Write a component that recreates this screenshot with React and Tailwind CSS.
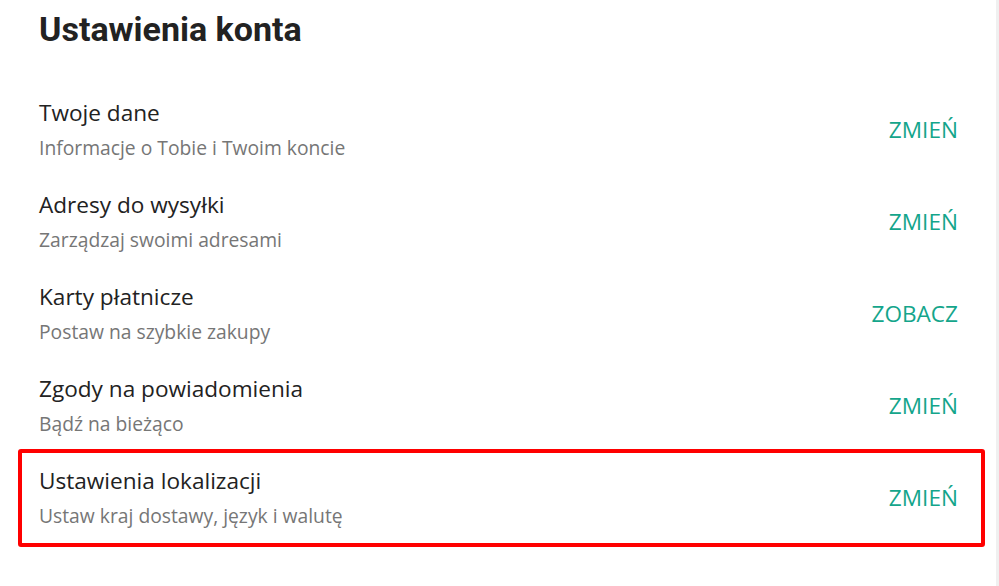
const ITEMS = [
  { title: 'Twoje dane', desc: 'Informacje o Tobie i Twoim koncie', action: 'ZMIEŃ' },
  { title: 'Adresy do wysyłki', desc: 'Zarządzaj swoimi adresami', action: 'ZMIEŃ' },
  { title: 'Karty płatnicze', desc: 'Postaw na szybkie zakupy', action: 'ZOBACZ' },
  { title: 'Zgody na powiadomienia', desc: 'Bądź na bieżąco', action: 'ZMIEŃ' },
  { title: 'Ustawienia lokalizacji', desc: 'Ustaw kraj dostawy, język i walutę', action: 'ZMIEŃ', highlight: true },
];

function Row({ item }) {
  const body = (
    <>
      <div className="flex flex-col">
        <span className="text-[22.6px] leading-[28px] text-[#222]">{item.title}</span>
        <span className="mt-[8px] text-[19.3px] leading-[26px] text-[#767676]">{item.desc}</span>
      </div>
      <button className="text-[22.6px] leading-[28px] text-[#14a58b]">{item.action}</button>
    </>
  );

  if (item.highlight) {
    return (
      <div className="flex items-center justify-between h-[98px] -my-[3px] -ml-[21px] -mr-[27px] pl-[17px] pr-[23px] border-4 border-[#ff0000] rounded-[3px]">
        {body}
      </div>
    );
  }
  return <div className="flex items-center justify-between h-[92px]">{body}</div>;
}

export default function App() {
  return (
    <div className="flex w-[999px] h-[586px] bg-white overflow-hidden" style={{ fontFamily: '"Open Sans", sans-serif' }}>
      <div className="flex-1 pl-[39px] pr-[38px]">
        <h1
          className="mt-[9px] text-[34px] leading-[40px] font-bold text-[#222]"
          style={{ fontFamily: 'Roboto, sans-serif' }}
        >
          Ustawienia konta
        </h1>
        <div className="mt-[35px] flex flex-col">
          {ITEMS.map(item => (
            <Row key={item.title} item={item} />
          ))}
        </div>
      </div>
      <div className="w-[3px] bg-[#f0f0f0]" />
    </div>
  );
}
